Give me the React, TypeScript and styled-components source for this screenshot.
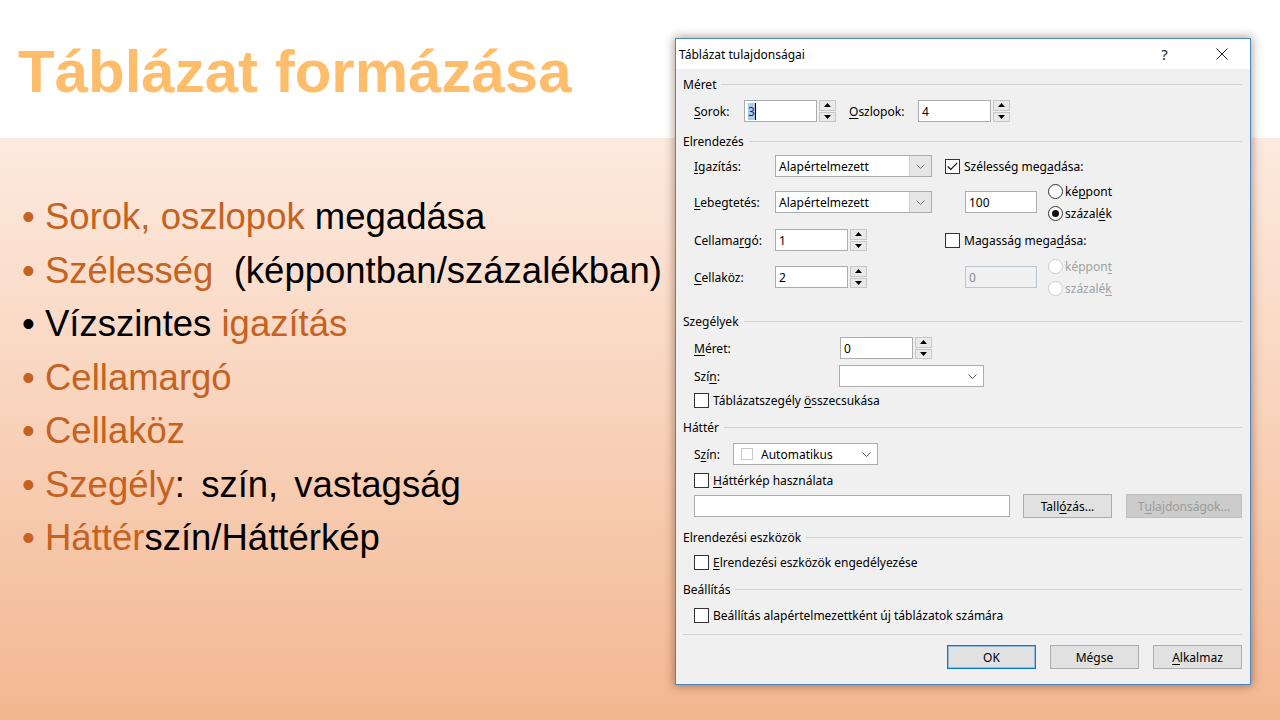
import React from "react";
import styled, { createGlobalStyle } from "styled-components";

const Global = createGlobalStyle`
  html, body { margin: 0; padding: 0; }
  body { width: 1280px; height: 720px; overflow: hidden; background: #fff; }
`;

const Slide = styled.div`
  position: relative;
  width: 1280px;
  height: 720px;
  display: flex;
  flex-direction: column;
  overflow: hidden;
  font-family: "Liberation Sans", Arial, sans-serif;
`;

const Header = styled.header`
  flex: none;
  height: 138px;
  box-sizing: border-box;
  padding: 37px 0 0 18px;
  background: #fff;
`;

const Title = styled.h1`
  margin: 0;
  font-size: 60px;
  line-height: 70px;
  font-weight: 700;
  color: #fdbd6b;
`;

const Content = styled.main`
  flex: 1;
  padding: 52px 0 0 22px;
  background: linear-gradient(180deg, #fdeadf 0%, #f9d4bd 45%, #f3b791 100%);
`;

const BulletList = styled.ul`
  list-style: none;
  margin: 0;
  padding: 0;
  font-size: 36.5px;
  line-height: 53.5px;
`;

const Bullet = styled.li<{ $dark?: boolean }>`
  display: block;
  white-space: pre;
  padding-left: 23px;
  &::before {
    content: "•";
    display: inline-block;
    width: 23px;
    margin-left: -23px;
    color: ${(p) => (p.$dark ? "#000" : "#c6621f")};
  }
`;

const Or = styled.span`
  color: #c6621f;
`;
const Bk = styled.span<{ $ws?: number }>`
  color: #000;
  word-spacing: ${(p) => p.$ws ?? 0}px;
`;

/* ---------- dialog ---------- */

const Dialog = styled.section`
  position: absolute;
  left: 675px;
  top: 38px;
  width: 576px;
  height: 647px;
  box-sizing: border-box;
  border: 1px solid #4f86c0;
  background: #f0f0f0;
  box-shadow: 0 0 9px 1px rgba(70, 35, 10, 0.45);
  display: flex;
  flex-direction: column;
  font-family: "Noto Sans", "Segoe UI", sans-serif;
  font-size: 12px;
  color: #000;
`;

const TitleBar = styled.div`
  flex: none;
  height: 30px;
  background: #fff;
  display: flex;
  align-items: center;
`;

const TitleText = styled.div`
  flex: 1;
  padding-left: 3px;
`;

const CaptionButton = styled.div`
  width: 57px;
  height: 30px;
  display: flex;
  align-items: center;
  justify-content: center;
  font-size: 15px;
  color: #222;
`;

const Body = styled.div`
  flex: 1;
  display: flex;
  flex-direction: column;
  padding: 7px 8px 0 7px;
`;

const SectionHeader = styled.div`
  flex: none;
  height: 16px;
  display: flex;
  align-items: center;
  gap: 5px;
  &::after {
    content: "";
    flex: 1;
    border-top: 1px solid #d2d2d2;
  }
`;

const SectionBody = styled.div<{ $pt: number; $pb: number }>`
  display: flex;
  flex-direction: column;
  padding: ${(p) => p.$pt}px 0 ${(p) => p.$pb}px 11px;
`;

const Row = styled.div<{ $h: number; $mt?: number }>`
  display: flex;
  align-items: center;
  height: ${(p) => p.$h}px;
  margin-top: ${(p) => p.$mt ?? 0}px;
`;

const Label = styled.span<{ $w: number; $ml?: number }>`
  width: ${(p) => p.$w}px;
  margin-left: ${(p) => p.$ml ?? 0}px;
  flex: none;
`;

const U = styled.span`
  text-decoration: underline;
  text-underline-offset: 2px;
`;

const TextBox = styled.div<{ $w: number; $disabled?: boolean }>`
  width: ${(p) => p.$w}px;
  height: 22px;
  box-sizing: border-box;
  flex: none;
  display: flex;
  align-items: center;
  padding-left: 3px;
  background: ${(p) => (p.$disabled ? "#f0f0f0" : "#fff")};
  border: 1px solid ${(p) => (p.$disabled ? "#bcc6d2" : "#acacac")};
  color: ${(p) => (p.$disabled ? "#8c8c8c" : "#000")};
`;

const Selected = styled.span`
  background: #a9cdef;
  color: #1b2a6b;
  border-right: 1px solid #000;
`;

const SpinWrap = styled.div`
  flex: none;
  width: 17px;
  height: 22px;
  margin-left: 2px;
  display: flex;
  flex-direction: column;
  gap: 1px;
`;

const SpinBtn = styled.div`
  flex: 1;
  box-sizing: border-box;
  border: 1px solid #c7c7c7;
  background: #e9e9e9;
  display: flex;
  align-items: center;
  justify-content: center;
`;

const Combo = styled.div<{ $w: number }>`
  width: ${(p) => p.$w}px;
  height: 22px;
  box-sizing: border-box;
  flex: none;
  display: flex;
  align-items: center;
  background: #fff;
  border: 1px solid #acacac;
`;

const ComboText = styled.span`
  flex: 1;
  padding-left: 3px;
  display: flex;
  align-items: center;
  gap: 8px;
`;

const Swatch = styled.span`
  width: 12px;
  height: 12px;
  box-sizing: border-box;
  border: 1px solid #c8c8c8;
  background: #fff;
  margin-left: 4px;
`;

const DropButton = styled.span<{ $grey?: boolean }>`
  width: 21px;
  align-self: stretch;
  display: flex;
  align-items: center;
  justify-content: center;
  background: ${(p) => (p.$grey ? "#e6e6e6" : "transparent")};
  border-left: 1px solid ${(p) => (p.$grey ? "#d0d0d0" : "transparent")};
`;

const CheckRow = styled.div<{ $mt?: number }>`
  display: flex;
  align-items: center;
  gap: 4px;
  height: 16px;
  margin-top: ${(p) => p.$mt ?? 0}px;
`;

const Box = styled.span`
  flex: none;
  width: 15px;
  height: 15px;
  box-sizing: border-box;
  border: 1px solid #333;
  background: #fff;
  display: flex;
  align-items: center;
  justify-content: center;
`;

const RadioRow = styled.div<{ $disabled?: boolean }>`
  display: flex;
  align-items: center;
  gap: 2px;
  height: 15px;
  color: ${(p) => (p.$disabled ? "#a0a0a0" : "#000")};
`;

const Circle = styled.span<{ $disabled?: boolean }>`
  flex: none;
  width: 15px;
  height: 15px;
  box-sizing: border-box;
  border-radius: 50%;
  border: 1px solid ${(p) => (p.$disabled ? "#cccccc" : "#333")};
  background: #fff;
  display: flex;
  align-items: center;
  justify-content: center;
`;

const Dot = styled.span`
  width: 7px;
  height: 7px;
  border-radius: 50%;
  background: #111;
`;

const RadioStack = styled.div`
  display: flex;
  flex-direction: column;
  gap: 7px;
  margin-left: 11px;
`;

const Grid = styled.div`
  display: grid;
  grid-template-columns: 81px 170px 1fr;
  grid-template-rows: 34px 38px 38px 36px;
  align-items: center;
  padding: 0 0 18px 11px;
`;

const Cell = styled.div`
  display: flex;
  align-items: center;
`;

const Indent = styled.div`
  display: flex;
  align-items: center;
  margin-left: 20px;
`;

const Btn = styled.div<{ $w: number; $default?: boolean; $disabled?: boolean; $ml?: number }>`
  width: ${(p) => p.$w}px;
  height: 24px;
  margin-left: ${(p) => p.$ml ?? 0}px;
  box-sizing: border-box;
  flex: none;
  display: flex;
  align-items: center;
  justify-content: center;
  background: ${(p) => (p.$disabled ? "#cccccc" : "#e1e1e1")};
  color: ${(p) => (p.$disabled ? "#9b9b9b" : "#000")};
  border: 1px solid ${(p) => (p.$default ? "#0078d7" : p.$disabled ? "#bfbfbf" : "#adadad")};
  box-shadow: ${(p) => (p.$default ? "inset 0 0 0 1px rgba(0,120,215,0.35)" : "none")};
`;

const Divider = styled.div`
  border-top: 1px solid #d2d2d2;
`;

const Footer = styled.div`
  display: flex;
  justify-content: flex-end;
  gap: 14px;
  padding: 10px 0 0 0;
`;

const Chevron = ({ color = "#555" }: { color?: string }) => (
  <svg width="9" height="5" viewBox="0 0 9 5">
    <polyline points="0.5,0.5 4.5,4.5 8.5,0.5" fill="none" stroke={color} strokeWidth="1" />
  </svg>
);

const Spinner = () => (
  <SpinWrap>
    <SpinBtn>
      <svg width="7" height="4" viewBox="0 0 7 4">
        <polygon points="0,4 7,4 3.5,0" fill="#000" />
      </svg>
    </SpinBtn>
    <SpinBtn>
      <svg width="7" height="4" viewBox="0 0 7 4">
        <polygon points="0,0 7,0 3.5,4" fill="#000" />
      </svg>
    </SpinBtn>
  </SpinWrap>
);

const Check = ({ checked }: { checked?: boolean }) => (
  <Box>
    {checked && (
      <svg width="11" height="9" viewBox="0 0 11 9">
        <polyline points="0.8,4.5 3.8,7.5 10.2,0.8" fill="none" stroke="#111" strokeWidth="1.2" />
      </svg>
    )}
  </Box>
);

const Radio = ({ checked, disabled, children }: { checked?: boolean; disabled?: boolean; children: React.ReactNode }) => (
  <RadioRow $disabled={disabled}>
    <Circle $disabled={disabled}>{checked && <Dot />}</Circle>
    <span>{children}</span>
  </RadioRow>
);

export default function App() {
  return (
    <Slide>
      <Global />
      <Header>
        <Title>Táblázat formázása</Title>
      </Header>
      <Content>
        <BulletList>
          <Bullet>
            <Or>Sorok, oszlopok</Or>{" "}<Bk>megadása</Bk>
          </Bullet>
          <Bullet>
            <Or>Szélesség</Or>{"  "}<Bk>(képpontban/százalékban)</Bk>
          </Bullet>
          <Bullet $dark>
            <Bk>Vízszintes</Bk>{" "}<Or>igazítás</Or>
          </Bullet>
          <Bullet>
            <Or>Cellamargó</Or>
          </Bullet>
          <Bullet>
            <Or>Cellaköz</Or>
          </Bullet>
          <Bullet>
            <Or>Szegély</Or>
            <Bk $ws={6}>{": szín, vastagság"}</Bk>
          </Bullet>
          <Bullet>
            <Or>Háttér</Or>
            <Bk>szín/Háttérkép</Bk>
          </Bullet>
        </BulletList>
      </Content>

      <Dialog>
        <TitleBar>
          <TitleText>Táblázat tulajdonságai</TitleText>
          <CaptionButton>?</CaptionButton>
          <CaptionButton>
            <svg width="12" height="12" viewBox="0 0 12 12">
              <path d="M0.5 0.5 L11.5 11.5 M11.5 0.5 L0.5 11.5" stroke="#222" strokeWidth="1" />
            </svg>
          </CaptionButton>
        </TitleBar>
        <Body>
          <SectionHeader>Méret</SectionHeader>
          <SectionBody $pt={8} $pb={11}>
            <Row $h={22}>
              <Label $w={50}>
                <U>S</U>orok:
              </Label>
              <TextBox $w={73}>
                <Selected>3</Selected>
              </TextBox>
              <Spinner />
              <Label $w={69} $ml={13}>
                <U>O</U>szlopok:
              </Label>
              <TextBox $w={73}>4</TextBox>
              <Spinner />
            </Row>
          </SectionBody>

          <SectionHeader>Elrendezés</SectionHeader>
          <Grid>
            <Label $w={81}>
              <U>I</U>gazítás:
            </Label>
            <Combo $w={157}>
              <ComboText>Alapértelmezett</ComboText>
              <DropButton $grey>
                <Chevron color="#777" />
              </DropButton>
            </Combo>
            <CheckRow>
              <Check checked />
              <span>
                Szélesség meg<U>a</U>dása:
              </span>
            </CheckRow>

            <Label $w={81}>
              <U>L</U>ebegtetés:
            </Label>
            <Combo $w={157}>
              <ComboText>Alapértelmezett</ComboText>
              <DropButton $grey>
                <Chevron color="#777" />
              </DropButton>
            </Combo>
            <Indent>
              <TextBox $w={72}>100</TextBox>
              <RadioStack>
                <Radio>
                  ké<U>p</U>pont
                </Radio>
                <Radio checked>
                  százal<U>é</U>k
                </Radio>
              </RadioStack>
            </Indent>

            <Label $w={81}>
              Cellama<U>r</U>gó:
            </Label>
            <Cell>
              <TextBox $w={73}>1</TextBox>
              <Spinner />
            </Cell>
            <CheckRow>
              <Check />
              <span>
                Magasság mega<U>d</U>ása:
              </span>
            </CheckRow>

            <Label $w={81}>
              <U>C</U>ellaköz:
            </Label>
            <Cell>
              <TextBox $w={73}>2</TextBox>
              <Spinner />
            </Cell>
            <Indent>
              <TextBox $w={72} $disabled>
                0
              </TextBox>
              <RadioStack>
                <Radio disabled>
                  képpon<U>t</U>
                </Radio>
                <Radio disabled>
                  százalé<U>k</U>
                </Radio>
              </RadioStack>
            </Indent>
          </Grid>

          <SectionHeader>Szegélyek</SectionHeader>
          <SectionBody $pt={8} $pb={11}>
            <Row $h={22}>
              <Label $w={146}>
                <U>M</U>éret:
              </Label>
              <TextBox $w={73}>0</TextBox>
              <Spinner />
            </Row>
            <Row $h={22} $mt={6}>
              <Label $w={145}>
                Szí<U>n</U>:
              </Label>
              <Combo $w={145}>
                <ComboText />
                <DropButton>
                  <Chevron />
                </DropButton>
              </Combo>
            </Row>
            <CheckRow $mt={5}>
              <Check />
              <span>
                Táblázatszegély <U>ö</U>sszecsukása
              </span>
            </CheckRow>
          </SectionBody>

          <SectionHeader>Háttér</SectionHeader>
          <SectionBody $pt={8} $pb={11}>
            <Row $h={22}>
              <Label $w={39}>
                S<U>z</U>ín:
              </Label>
              <Combo $w={145}>
                <ComboText>
                  <Swatch />
                  Automatikus
                </ComboText>
                <DropButton>
                  <Chevron />
                </DropButton>
              </Combo>
            </Row>
            <CheckRow $mt={7}>
              <Check />
              <span>
                <U>H</U>áttérkép használata
              </span>
            </CheckRow>
            <Row $h={24} $mt={6}>
              <TextBox $w={316} />
              <Btn $w={89} $ml={13}>
                Tall<U>ó</U>zás...
              </Btn>
              <Btn $w={116} $ml={14} $disabled>
                T<U>u</U>lajdonságok...
              </Btn>
            </Row>
          </SectionBody>

          <SectionHeader>Elrendezési eszközök</SectionHeader>
          <SectionBody $pt={9} $pb={11}>
            <CheckRow>
              <Check />
              <span>
                <U>E</U>lrendezési eszközök engedélyezése
              </span>
            </CheckRow>
          </SectionBody>

          <SectionHeader>Beállítás</SectionHeader>
          <SectionBody $pt={10} $pb={11}>
            <CheckRow>
              <Check />
              <span>
                Beállítás alapértelmezettként ú<U>j</U> táblázatok számára
              </span>
            </CheckRow>
          </SectionBody>

          <Divider />
          <Footer>
            <Btn $w={89} $default>
              OK
            </Btn>
            <Btn $w={89}>Mégse</Btn>
            <Btn $w={89}>
              <U>A</U>lkalmaz
            </Btn>
          </Footer>
        </Body>
      </Dialog>
    </Slide>
  );
}
